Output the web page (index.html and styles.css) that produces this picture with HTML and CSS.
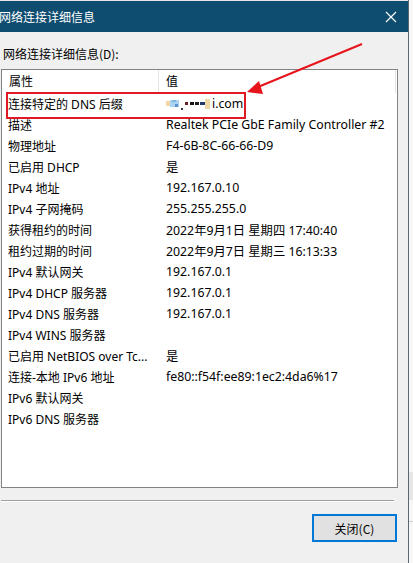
FILE: index.html
```html
<!DOCTYPE html>
<html lang="zh-CN">
<head>
<meta charset="utf-8">
<title>网络连接详细信息</title>
<link rel="stylesheet" href="styles.css">
</head>
<body>
<div class="screen">
  <div class="dialog">
    <div class="topgap"></div>
    <div class="titlebar">
      <span class="title">网络连接详细信息</span>
      <svg class="close" width="12" height="12" viewBox="0 0 12 12"><path d="M1 1 L11 11 M11 1 L1 11" stroke="#ffffff" stroke-width="1.2" fill="none"/></svg>
    </div>
    <div class="content">
      <div class="label">网络连接详细信息(D):</div>
      <div class="listbox">
        <div class="header">
          <div class="hcell c1">属性</div>
          <div class="hcell c2">值</div>
          <div class="hcell c3"></div>
        </div>
        <div class="rows">
          <div class="row"><div class="k">连接特定的 DNS 后缀</div><div class="v"><svg class="mosaic" width="46" height="16" viewBox="0 0 46 16"><rect x="0" y="5" width="4" height="5" fill="#f3d6a6"/><rect x="4" y="4" width="9" height="7" fill="#a9d3f0"/><rect x="6" y="4" width="4" height="2" fill="#7fb6e2"/><rect x="9" y="8" width="3" height="3" fill="#5b8fd0"/><rect x="15" y="12" width="2" height="2" fill="#30304a"/><rect x="19" y="6" width="3" height="3" fill="#6a2020"/><rect x="24" y="6" width="4" height="3" fill="#151515"/><rect x="29" y="6" width="4" height="3" fill="#202020"/><rect x="34" y="6" width="6" height="3" fill="#23396e"/><rect x="39" y="3" width="5" height="10" fill="#f0d7a8"/></svg><span>i.com</span></div></div>
          <div class="row"><div class="k">描述</div><div class="v">Realtek PCIe GbE Family Controller #2</div></div>
          <div class="row"><div class="k">物理地址</div><div class="v">F4-6B-8C-66-66-D9</div></div>
          <div class="row"><div class="k">已启用 DHCP</div><div class="v">是</div></div>
          <div class="row"><div class="k">IPv4 地址</div><div class="v">192.167.0.10</div></div>
          <div class="row"><div class="k">IPv4 子网掩码</div><div class="v">255.255.255.0</div></div>
          <div class="row"><div class="k">获得租约的时间</div><div class="v">2022年9月1日 星期四 17:40:40</div></div>
          <div class="row"><div class="k">租约过期的时间</div><div class="v">2022年9月7日 星期三 16:13:33</div></div>
          <div class="row"><div class="k">IPv4 默认网关</div><div class="v">192.167.0.1</div></div>
          <div class="row"><div class="k">IPv4 DHCP 服务器</div><div class="v">192.167.0.1</div></div>
          <div class="row"><div class="k">IPv4 DNS 服务器</div><div class="v">192.167.0.1</div></div>
          <div class="row"><div class="k">IPv4 WINS 服务器</div><div class="v"></div></div>
          <div class="row"><div class="k">已启用 NetBIOS over Tc...</div><div class="v">是</div></div>
          <div class="row"><div class="k">连接-本地 IPv6 地址</div><div class="v">fe80::f54f:ee89:1ec2:4da6%17</div></div>
          <div class="row"><div class="k">IPv6 默认网关</div><div class="v"></div></div>
          <div class="row"><div class="k">IPv6 DNS 服务器</div><div class="v"></div></div>
        </div>
      </div>
      <div class="separator"></div>
      <div class="footer">
        <button class="btn">关闭(C)</button>
      </div>
    </div>
  </div>
  <div class="behind">
    <div class="b1"></div>
    <div class="b2"></div>
    <div class="b3"></div>
  </div>
  <div class="redbox"></div>
  <svg class="arrow" width="413" height="563" viewBox="0 0 413 563">
    <line x1="362" y1="44" x2="258" y2="87" stroke="#e8141b" stroke-width="2"/>
    <polygon points="247,92 259,81 263,94" fill="#e8141b"/>
  </svg>
</div>
</body>
</html>
```
FILE: styles.css
```css
* { box-sizing: border-box; }
html, body { margin: 0; padding: 0; }
body {
  width: 413px;
  height: 563px;
  overflow: hidden;
  background: #f2f2f2;
  font-family: "Noto Sans", "Noto Sans CJK SC", sans-serif;
  font-size: 12px;
  color: #000;
}
.screen {
  position: relative;
  display: flex;
  width: 413px;
  height: 563px;
}
.dialog {
  width: 409px;
  height: 563px;
  display: flex;
  flex-direction: column;
  border-right: 1px solid #5d6670;
  background: #f0f0f0;
}
.topgap { height: 1px; background: #e6e6e6; }
.titlebar {
  height: 31px;
  background: #0e4c70;
  display: flex;
  align-items: center;
  justify-content: space-between;
  padding: 0 11px 0 0;
  color: #fff;
}
.title {
  margin-left: -1px;
  font-family: "Noto Sans CJK SC", sans-serif;
  font-size: 12px;
  line-height: 16px;
}
.close { display: block; }
.content {
  flex: 1;
  display: flex;
  flex-direction: column;
  padding: 14px 0 0 1px;
}
.label {
  padding-left: 2px;
  line-height: 16px;
  height: 23px;
  font-family: "Noto Sans CJK SC", sans-serif;
}
.listbox {
  width: 397px;
  height: 419px;
  border: 1px solid #838383;
  background: #fff;
  display: flex;
  flex-direction: column;
}
.header {
  display: flex;
  height: 23px;
}
.hcell {
  line-height: 22px;
  padding-left: 7px;
  border-right: 1px solid #e5e5e5;
  font-family: "Noto Sans CJK SC", sans-serif;
}
.c1 { width: 157px; }
.c2 { width: 237px; }
.c3 { width: 1px; border-right: none; padding: 0; }
.rows { display: flex; flex-direction: column; }
.row {
  display: flex;
  height: 21px;
  align-items: center;
  white-space: nowrap;
}
.k {
  width: 157px;
  padding-left: 6px;
  overflow: hidden;
}
.v {
  padding-left: 7px;
  display: flex;
  align-items: center;
  font-size: 12.3px;
}
.mosaic { display: block; }
.separator {
  margin-top: 12px;
  width: 393px;
  height: 2px;
  border-top: 1px solid #a0a0a0;
  border-bottom: 1px solid #ffffff;
}
.footer {
  display: flex;
  justify-content: flex-end;
  padding: 12px 11px 0 0;
}
.btn {
  width: 85px;
  height: 28px;
  background: #e1e1e1;
  border: 2px solid #0078d7;
  font-family: "Noto Sans CJK SC", sans-serif;
  font-size: 12px;
  color: #000;
  padding: 0;
}
.behind {
  flex: 1;
  display: flex;
  flex-direction: column;
  background: #f7f7f7;
}
.b1 { height: 472px; }
.b2 { height: 28px; background: #e6e6e6; }
.b3 { height: 22px; border-bottom: 1px solid #d0d0d0; }
.redbox {
  position: absolute;
  left: 6px;
  top: 92px;
  width: 240px;
  height: 27px;
  border: 2px solid #e01a22;
}
.arrow {
  position: absolute;
  left: 0;
  top: 0;
  pointer-events: none;
}
```
